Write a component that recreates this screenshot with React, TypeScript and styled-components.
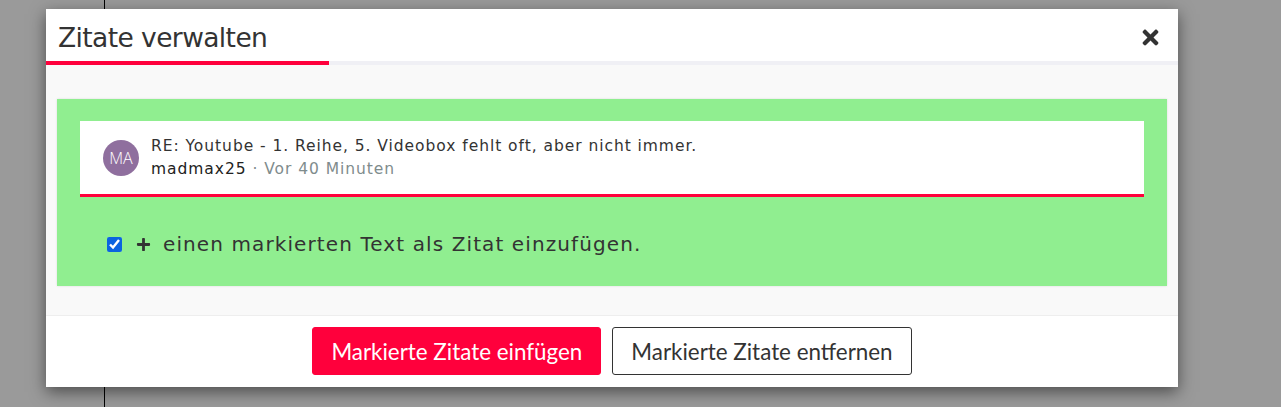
import React from "react"
import styled, { createGlobalStyle } from "styled-components"
import { FaPlus, FaTimes } from "react-icons/fa"

const GlobalStyle = createGlobalStyle`
  html, body {
    margin: 0;
    padding: 0;
    background: #9a9a9a;
    font-family: "DejaVu Sans", Verdana, sans-serif;
  }
`

const App = () => {
  return (
    <>
      <GlobalStyle />
      <Page>
        <Sidebar />
        <Modal>
          <ModalHeader>
            <ModalTitle>Zitate verwalten</ModalTitle>
            <CloseButton aria-label="Schließen">
              <FaTimes />
            </CloseButton>
          </ModalHeader>
          <HeaderBar>
            <HeaderBarFill $width={283} />
          </HeaderBar>

          <ModalBody>
            <QuoteArea>
              <QuoteCard>
                <Avatar>MA</Avatar>
                <QuoteInfo>
                  <QuoteTitle>RE: Youtube - 1. Reihe, 5. Videobox fehlt oft, aber nicht immer.</QuoteTitle>
                  <QuoteMeta>
                    <Author>madmax25</Author>
                    <Muted> · Vor 40 Minuten</Muted>
                  </QuoteMeta>
                </QuoteInfo>
              </QuoteCard>

              <HintRow>
                <Check type="checkbox" defaultChecked />
                <PlusIcon>
                  <FaPlus />
                </PlusIcon>
                <span>einen markierten Text als Zitat einzufügen.</span>
              </HintRow>
            </QuoteArea>
          </ModalBody>

          <ModalFooter>
            <Button $primary>Markierte Zitate einfügen</Button>
            <Button>Markierte Zitate entfernen</Button>
          </ModalFooter>
        </Modal>
      </Page>
    </>
  )
}

const Page = styled.div`
  position: relative;
  display: flex;
  width: 1281px;
  height: 407px;
  overflow: hidden;
`

const Sidebar = styled.div`
  width: 104px;
  flex-shrink: 0;
  border-right: 1px solid #000;
`

const Modal = styled.div`
  position: absolute;
  left: 46px;
  top: 9px;
  width: 1132px;
  display: flex;
  flex-direction: column;
  background: #fff;
  font-family: "DejaVu Sans", Verdana, sans-serif;
  box-shadow: 0 5px 15px rgba(0, 0, 0, 0.5);
`

const ModalHeader = styled.div`
  display: flex;
  align-items: center;
  justify-content: space-between;
  height: 52px;
  padding: 0 16px 0 12px;
`

const ModalTitle = styled.h4`
  margin: 6px 0 0;
  font-size: 26.5px;
  letter-spacing: -0.6px;
  font-weight: 400;
  color: #333;
  line-height: 1;
`

const CloseButton = styled.button`
  display: flex;
  align-items: center;
  border: 0;
  padding: 0;
  background: none;
  color: #333;
  font-size: 23px;
  margin-top: 4px;
  cursor: pointer;
`

const HeaderBar = styled.div`
  height: 4px;
  background: #f0f0f5;
`

const HeaderBarFill = styled.div<{ $width: number }>`
  width: ${(p) => p.$width}px;
  height: 100%;
  background: #ff003c;
`

const ModalBody = styled.div`
  background: #f9f9f9;
  padding: 34px 11px 29px;
  border-bottom: 1px solid #eee;
`

const QuoteArea = styled.div`
  background: #90ee90;
  padding: 22px 23px 0;
  height: 187px;
  box-sizing: border-box;
  box-shadow: 0 0 2px rgba(0, 0, 0, 0.12);
`

const QuoteCard = styled.div`
  display: flex;
  align-items: center;
  gap: 12px;
  height: 76px;
  box-sizing: border-box;
  padding: 0 23px;
  background: #fff;
  border-bottom: 3px solid #ff003c;
`

const Avatar = styled.div`
  display: flex;
  align-items: center;
  justify-content: center;
  width: 36px;
  height: 36px;
  border-radius: 50%;
  background: #8f6f9e;
  color: #fff;
  font-family: "Open Sans", sans-serif;
  font-size: 16px;
  font-weight: 300;
`

const QuoteInfo = styled.div`
  display: flex;
  flex-direction: column;
  font-size: 15.5px;
  letter-spacing: 0.95px;
  line-height: 23px;
  margin-top: 1px;
`

const QuoteTitle = styled.div`
  color: #333;
`

const QuoteMeta = styled.div`
  color: #7f8c8d;
`

const Author = styled.span`
  color: #222;
`

const Muted = styled.span`
  color: #7f8c8d;
`

const HintRow = styled.label`
  display: flex;
  align-items: center;
  height: 94px;
  padding-left: 27px;
  font-size: 20px;
  letter-spacing: 1.1px;
  color: #333;
`

const Check = styled.input`
  width: 15px;
  height: 15px;
  margin: 0 14px 0 0;
  accent-color: #0b63e0;
`

const PlusIcon = styled.span`
  display: flex;
  font-size: 15px;
  margin-right: 12px;
  color: #333;
`

const ModalFooter = styled.div`
  display: flex;
  justify-content: center;
  gap: 11px;
  padding: 11px 0 12px;
`

const Button = styled.button<{ $primary?: boolean }>`
  height: 48px;
  padding: 0 18px;
  border-radius: 3px;
  font-family: "Lato", sans-serif;
  font-size: 22.4px;
  font-weight: 400;
  cursor: pointer;
  border: 1px solid ${(p) => (p.$primary ? "#ff003c" : "#333")};
  background: ${(p) => (p.$primary ? "#ff003c" : "#fff")};
  color: ${(p) => (p.$primary ? "#fff" : "#333")};
`

export default App
